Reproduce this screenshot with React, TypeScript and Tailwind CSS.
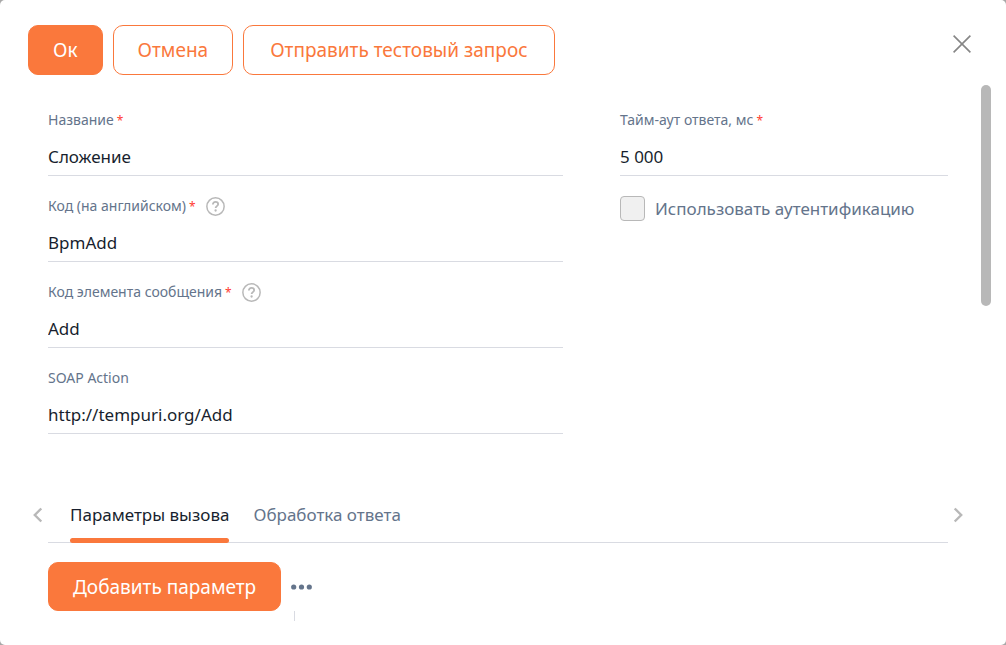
import type { ReactNode } from "react";
import { cva } from "class-variance-authority";
import type { VariantProps } from "class-variance-authority";
import { clsx } from "clsx";

const button = cva(
  "inline-flex shrink-0 items-center justify-center whitespace-nowrap rounded-[10px] border border-[#fa783c] text-[19px] leading-6",
  {
    variants: {
      variant: {
        primary: "bg-[#fa783c] text-white",
        outline: "bg-white text-[#fa783c]",
      },
      padding: {
        normal: "px-6",
        wide: "px-[26px]",
      },
    },
    defaultVariants: { variant: "outline", padding: "normal" },
  },
);

interface ButtonProps extends VariantProps<typeof button> {
  children: ReactNode;
  className?: string;
}

function Button({ variant, padding, className, children }: ButtonProps) {
  return (
    <button type="button" className={clsx(button({ variant, padding }), className)}>
      {children}
    </button>
  );
}

function HelpButton({ label }: { label: string }) {
  return (
    <button type="button" aria-label={label} className="ml-2.5 text-[#b8b8b8]">
      <svg width="19" height="19" viewBox="0 0 18 18" fill="none" stroke="currentColor">
        <circle cx="9" cy="9" r="8.2" strokeWidth="1.4" />
        <path d="M6.5 7.1c0-1.6 1-2.5 2.5-2.5s2.5.9 2.5 2.2c0 1.8-2.4 1.9-2.4 3.7" strokeWidth="1.7" />
        <circle cx="9.1" cy="12.8" r="1.1" fill="currentColor" stroke="none" />
      </svg>
    </button>
  );
}

interface FieldProps {
  id: string;
  label: string;
  value: string;
  required?: boolean;
  help?: boolean;
}

function Field({ id, label, value, required, help }: FieldProps) {
  return (
    <div>
      <div className="mb-2 flex h-6 items-center">
        <label htmlFor={id} className="text-[14px] leading-6 text-[#64748b]">
          {label}
          {required ? <span className="ml-[3px] text-[12px] text-[#ff3b30]">*</span> : null}
        </label>
        {help ? <HelpButton label={`Справка: ${label}`} /> : null}
      </div>
      <input
        id={id}
        type="text"
        defaultValue={value}
        required={required}
        className="block h-9 w-full border-b border-[#d9dbe2] bg-transparent pb-0.5 text-[17px] text-[#181f2e] outline-none"
      />
    </div>
  );
}

const mainFields: FieldProps[] = [
  { id: "name", label: "Название", value: "Сложение", required: true },
  { id: "code", label: "Код (на английском)", value: "BpmAdd", required: true, help: true },
  { id: "element-code", label: "Код элемента сообщения", value: "Add", required: true, help: true },
  { id: "soap-action", label: "SOAP Action", value: "http://tempuri.org/Add" },
];

const tabs = [
  { label: "Параметры вызова", active: true },
  { label: "Обработка ответа", active: false },
];

function Chevron({ direction }: { direction: "left" | "right" }) {
  return (
    <svg width="10" height="16" viewBox="0 0 10 16" fill="none" stroke="#b8b8b8" strokeWidth="2.4">
      <path d={direction === "left" ? "M8.3 1.5 1.8 8l6.5 6.5" : "M1.7 1.5 8.2 8l-6.5 6.5"} />
    </svg>
  );
}

function Tabs() {
  return (
    <div className="mt-[53px] flex">
      <button type="button" aria-label="Предыдущие вкладки" className="flex w-5 items-center justify-center">
        <Chevron direction="left" />
      </button>
      <div role="tablist" className="flex h-14 flex-1 gap-6 border-b border-[#d9dbe2] px-[22px]">
        {tabs.map((tab) => (
          <button
            key={tab.label}
            type="button"
            role="tab"
            aria-selected={tab.active}
            className={clsx(
              "relative h-14 whitespace-nowrap text-[17px]",
              tab.active ? "text-[#181f2e]" : "text-[#64748b]",
            )}
          >
            {tab.label}
            {tab.active ? (
              <span className="absolute inset-x-0 bottom-0 h-[5px] rounded-full bg-[#fa783c]" />
            ) : null}
          </button>
        ))}
      </div>
      <button type="button" aria-label="Следующие вкладки" className="flex w-5 items-center justify-center">
        <Chevron direction="right" />
      </button>
    </div>
  );
}

export default function App() {
  return (
    <div className="min-h-screen bg-[#a8a8a8] font-['Noto_Sans',sans-serif]">
      <div role="dialog" aria-label="Метод веб-сервиса" className="min-h-screen rounded-[5px] bg-white pt-[25px]">
        <header className="flex items-start gap-2.5 px-7">
          <Button variant="primary" className="h-[50px]">Ок</Button>
          <Button className="h-[50px]">Отмена</Button>
          <Button padding="wide" className="h-[50px]">Отправить тестовый запрос</Button>
          <button type="button" aria-label="Закрыть" className="mt-2.5 ml-auto mr-[7px] text-[#868686]">
            <svg width="18" height="18" viewBox="0 0 18 18" fill="none" stroke="currentColor" strokeWidth="1.6">
              <path d="M.6.6l16.8 16.8M17.4.6.6 17.4" />
            </svg>
          </button>
        </header>

        <div className="flex gap-[13px] pt-2.5 pr-[15px] pl-7">
          <main className="min-w-0 flex-1 pt-[23px]">
            <form className="grid grid-cols-[515fr_328fr] gap-x-[57px] px-5">
              <div className="flex flex-col gap-[18px]">
                {mainFields.map((field) => (
                  <Field key={field.id} {...field} />
                ))}
              </div>
              <div className="flex flex-col gap-5">
                <Field id="timeout" label="Тайм-аут ответа, мс" value="5 000" required />
                <label className="flex items-center gap-2.5 text-[17px] leading-6 text-[#64748b]">
                  <input
                    type="checkbox"
                    className="size-[25px] shrink-0 appearance-none rounded-[4px] border border-[#b8b8b8] bg-[#f0f0f0]"
                  />
                  Использовать аутентификацию
                </label>
              </div>
            </form>

            <Tabs />

            <div className="mt-[19px] flex items-center gap-2.5 px-5">
              <Button variant="primary" className="h-[49px]">Добавить параметр</Button>
              <button type="button" aria-label="Ещё" className="text-[#64748b]">
                <svg width="21" height="6" viewBox="0 0 21 6" fill="currentColor">
                  <circle cx="2.7" cy="3" r="2.6" />
                  <circle cx="10.5" cy="3" r="2.6" />
                  <circle cx="18.3" cy="3" r="2.6" />
                </svg>
              </button>
            </div>
            {/* top of the column divider of the parameter list */}
            <div className="ml-[266px] h-2.5 w-px bg-[#d9dbe2]" />
          </main>
          <div className="h-[221px] w-2.5 shrink-0 rounded-full bg-[#b8b8b8]" />
        </div>
      </div>
    </div>
  );
}
